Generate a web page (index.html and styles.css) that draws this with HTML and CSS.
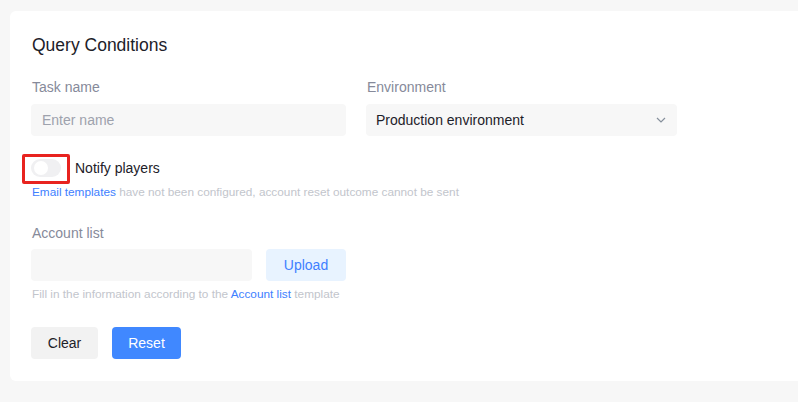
FILE: index.html
```html
<!DOCTYPE html>
<html lang="en">
<head>
<meta charset="utf-8">
<title>Query Conditions</title>
<link rel="stylesheet" href="styles.css">
</head>
<body>
<div class="card">
  <h2 class="title">Query Conditions</h2>
  <div class="grid">
    <div class="field">
      <div class="label">Task name</div>
      <div class="input"><span class="placeholder">Enter name</span></div>
    </div>
    <div class="field">
      <div class="label">Environment</div>
      <div class="input select">
        <span class="value">Production environment</span>
        <svg class="chev" width="10" height="6" viewBox="0 0 10 6"><path d="M1 1l4 4 4-4" fill="none" stroke="#86909c" stroke-width="1.2"/></svg>
      </div>
    </div>
  </div>
  <div class="switch-row">
    <span class="switch"><span class="knob"></span><span class="mark"></span></span>
    <span class="switch-text">Notify players</span>
  </div>
  <div class="hint"><a class="link">Email templates</a> have not been configured, account reset outcome cannot be sent</div>
  <div class="label label-account">Account list</div>
  <div class="upload-row">
    <div class="input upload-input"></div>
    <button class="btn btn-light">Upload</button>
  </div>
  <div class="hint">Fill in the information according to the <a class="link">Account list</a> template</div>
  <div class="actions">
    <button class="btn btn-gray">Clear</button>
    <button class="btn btn-primary">Reset</button>
  </div>
</div>
</body>
</html>
```
FILE: styles.css
```css
html, body {
  margin: 0;
  padding: 0;
  background: #f7f7f7;
  overflow: hidden;
  font-family: "Liberation Sans", Arial, sans-serif;
}
.card {
  background: #fff;
  margin: 11px -30px 0 10px;
  border-radius: 6px;
  padding: 22px 21px 22px 21px;
  height: 326px;
}
.title {
  margin: 0;
  font-size: 17.5px;
  font-weight: normal;
  line-height: 24px;
  color: #1d2129;
  padding-left: 1px;
}
.grid {
  display: grid;
  grid-template-columns: 315px 311px;
  column-gap: 20px;
  margin-top: 19px;
}
.label {
  font-size: 14px;
  line-height: 22px;
  color: #868a9a;
  padding-left: 1px;
  margin-bottom: 6px;
}
.input {
  height: 32px;
  background: #f7f7f7;
  border-radius: 4px;
  display: flex;
  align-items: center;
  padding: 0 11px;
  box-sizing: border-box;
  font-size: 14px;
}
.placeholder { color: #9ea2ad; }
.select { justify-content: space-between; padding-left: 10px; padding-right: 11px; }
.value { color: #1d2129; }
.chev { display: block; }
.switch-row {
  display: flex;
  align-items: center;
  height: 22px;
  margin-top: 21px;
}
.switch {
  position: relative;
  width: 30px;
  height: 18px;
  border-radius: 9px;
  background: #f0f0f2;
  margin-right: 14px;
}
.knob {
  position: absolute;
  left: 3px;
  top: 2px;
  width: 14px;
  height: 14px;
  border-radius: 50%;
  background: #fff;
}
.mark {
  position: absolute;
  left: -9px;
  top: -5px;
  width: 48px;
  height: 30px;
  box-sizing: border-box;
  border: 3px solid #e8231f;
  border-radius: 2px;
}
.switch-text {
  font-size: 14px;
  color: #1d2129;
}
.hint {
  font-size: 11.8px;
  line-height: 20px;
  color: #c2c5cc;
  margin-top: 3px;
  padding-left: 1px;
}
.link { color: #4080ff; }
.label-account { margin-top: 20px; margin-bottom: 5px; }
.upload-row {
  display: flex;
  gap: 14px;
}
.upload-input { width: 221px; height: 32px; }
.btn {
  height: 32px;
  border: none;
  border-radius: 4px;
  font-family: "Liberation Sans", Arial, sans-serif;
  font-size: 14px;
  padding: 0;
  cursor: pointer;
}
.btn-light {
  width: 80px;
  background: #e8f3ff;
  color: #4080ff;
}
.actions {
  display: flex;
  gap: 14px;
  margin-top: 23px;
}
.btn-gray {
  width: 67px;
  background: #f2f2f2;
  color: #1d2129;
}
.btn-primary {
  width: 69px;
  background: #4088ff;
  color: #fff;
}
```
